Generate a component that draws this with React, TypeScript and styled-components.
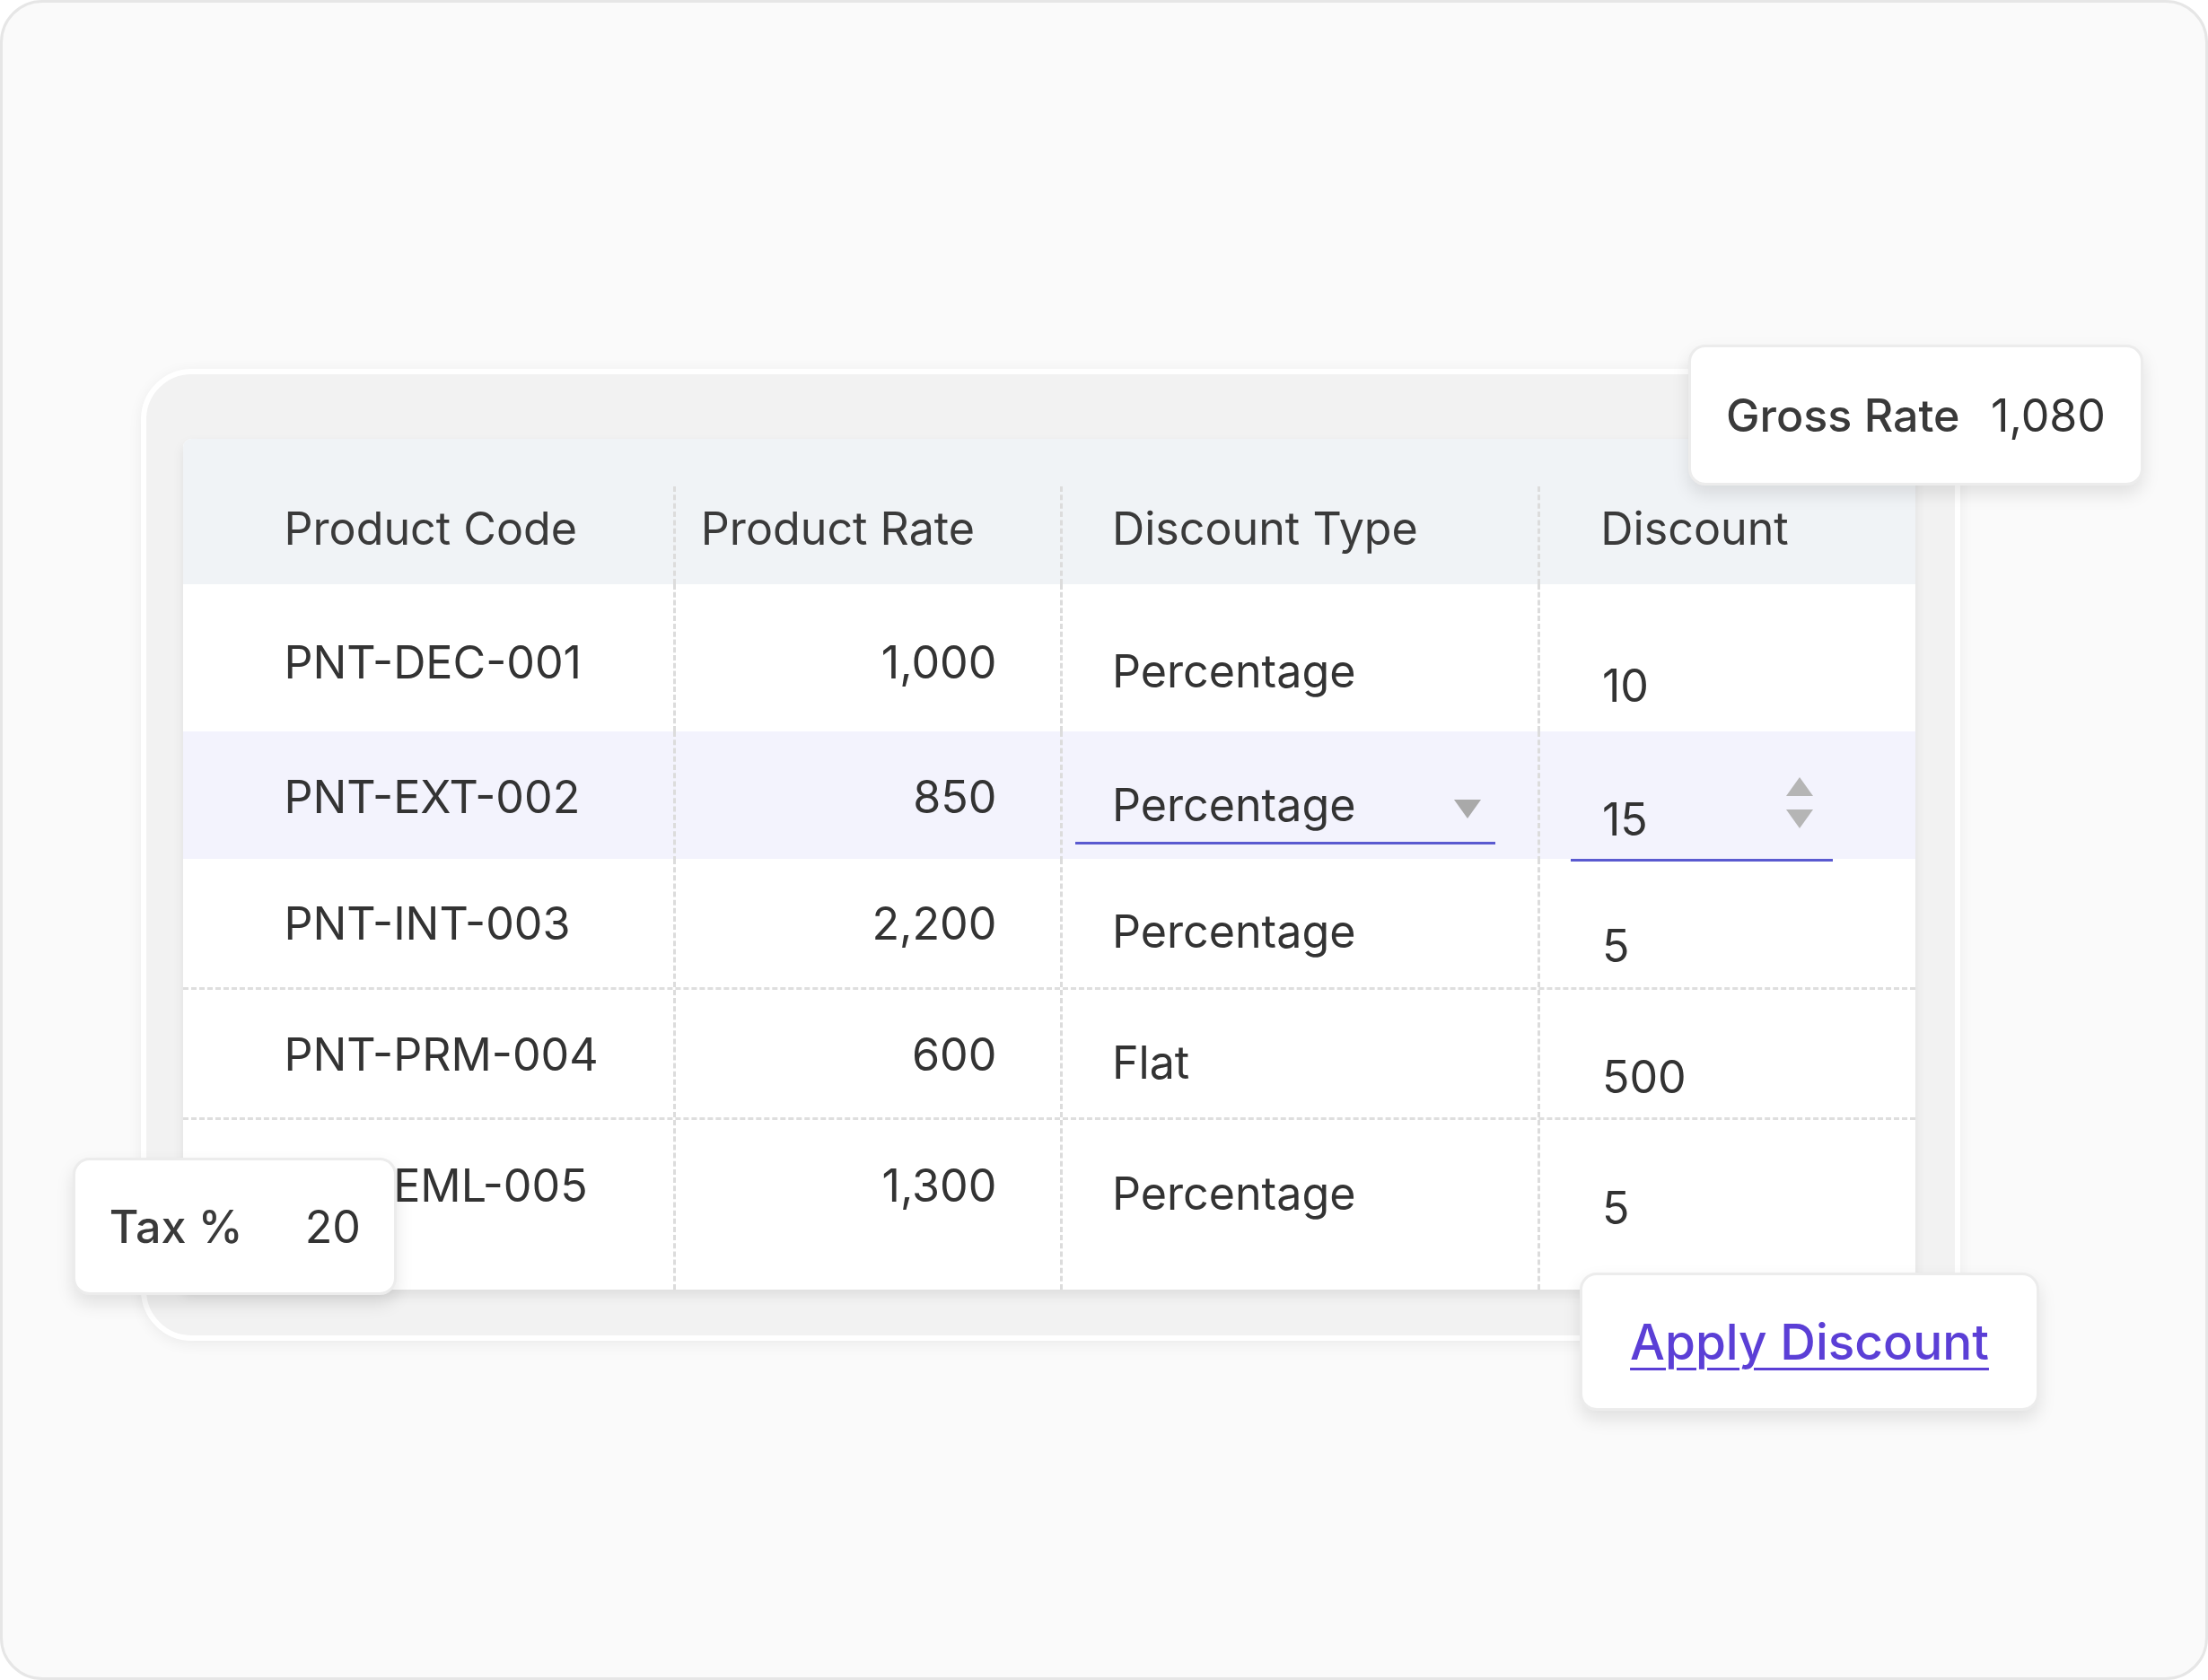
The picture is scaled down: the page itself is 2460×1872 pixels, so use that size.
import React from "react";
import styled, { createGlobalStyle } from "styled-components";

const Global = createGlobalStyle`
  body { margin: 0; background: #ffffff; font-family: "Inter", "Noto Sans", sans-serif; }
`;

const rows = [
  { code: "PNT-DEC-001", rate: "1,000", type: "Percentage", disc: "10" },
  { code: "PNT-EXT-002", rate: "850", type: "Percentage", disc: "15", active: true },
  { code: "PNT-INT-003", rate: "2,200", type: "Percentage", disc: "5", line: true },
  { code: "PNT-PRM-004", rate: "600", type: "Flat", disc: "500", line: true },
  { code: "PNT-EML-005", rate: "1,300", type: "Percentage", disc: "5" },
];

const App: React.FC = () => {
  return (
    <>
      <Global />
      <Stage>
        <Frame>
          <Panel>
            <Table>
              <HeadRow>
                <HeadCell $pad="0 0 0 72px">Product Code</HeadCell>
                <HeadCell $pad="0 0 0 18px" $dash>Product Rate</HeadCell>
                <HeadCell $pad="0 0 0 35px" $dash>Discount Type</HeadCell>
                <HeadCell $pad="0 0 0 43px" $dash>Discount</HeadCell>
              </HeadRow>
              {rows.map((r, i) => (
                <Row key={r.code} $active={r.active} $line={r.line} $h={i === 1 ? 90 : i === 0 ? 105 : i === 4 ? 120 : 93}>
                  <Cell $pad="0 0 0 72px" $top={i === 0 ? 40 : 30}>{r.code}</Cell>
                  <Cell $pad="0 45px 0 0" $top={i === 0 ? 40 : 30} $right $dash>{r.rate}</Cell>
                  <Cell $pad={r.active ? "0 0 0 9px" : "0 0 0 35px"} $top={i === 0 ? 46 : 36} $dash>
                    {r.active ? (
                      <Select>
                        Percentage
                        <Caret />
                      </Select>
                    ) : (
                      r.type
                    )}
                  </Cell>
                  <Cell $pad={r.active ? "0 0 0 22px" : "0 0 0 44px"} $top={i === 0 ? 56 : 46} $dash>
                    {r.active ? (
                      <NumInput>
                        15
                        <Spin>
                          <Up />
                          <Down />
                        </Spin>
                      </NumInput>
                    ) : (
                      r.disc
                    )}
                  </Cell>
                </Row>
              ))}
            </Table>
          </Panel>
          <Chip $left={1197} $top={243} $w={323} $h={100}>
            <Label>Gross Rate</Label>
            <Value>1,080</Value>
          </Chip>
          <Chip $left={50} $top={820} $w={230} $h={98}>
            <Label>Tax %</Label>
            <Value $gap={44}>20</Value>
          </Chip>
          <Chip $left={1120} $top={902} $w={326} $h={98}>
            <LinkText href="#">Apply Discount</LinkText>
          </Chip>
        </Frame>
      </Stage>
    </>
  );
};

const Stage = styled.div`
  zoom: 1.569;
  width: 1568px;
  height: 1193px;
`;

const Frame = styled.div`
  position: relative;
  box-sizing: border-box;
  width: 1568px;
  height: 1193px;
  background: #fafafa;
  border: 2px solid #e6e6e6;
  border-radius: 30px;
  padding: 260px 0 0 98px;
`;

const Panel = styled.div`
  box-sizing: border-box;
  width: 1292px;
  height: 690px;
  background: #f2f2f2;
  border: 4px solid #ffffff;
  border-radius: 36px;
  padding: 46px 28px 0 26px;
  box-shadow: 0 2px 10px rgba(0, 0, 0, 0.06);
`;

const Table = styled.div`
  background: #ffffff;
  border-radius: 6px 6px 0 0;
  overflow: hidden;
  box-shadow: 0 4px 8px rgba(0, 0, 0, 0.08);
  color: #333;
  font-size: 32px;
`;

const cols = "348px 275px 339px 266px";

const HeadRow = styled.div`
  display: grid;
  grid-template-columns: ${cols};
  height: 103px;
  background: #f0f3f6;
`;

const HeadCell = styled.div<{ $pad: string; $dash?: boolean }>`
  display: flex;
  align-items: flex-end;
  padding: ${(p) => p.$pad};
  padding-bottom: 20px;
  margin-top: 34px;
  border-left: ${(p) => (p.$dash ? "2px dashed #dcdcdc" : "none")};
  color: #3a3a3a;
`;

const Row = styled.div<{ $active?: boolean; $line?: boolean; $h: number }>`
  display: grid;
  grid-template-columns: ${cols};
  height: ${(p) => p.$h}px;
  background: ${(p) => (p.$active ? "#f3f3fd" : "#fff")};
  border-bottom: ${(p) => (p.$line ? "2px dashed #dedede" : "none")};
  box-sizing: border-box;
`;

const Cell = styled.div<{ $pad: string; $top: number; $right?: boolean; $dash?: boolean }>`
  box-sizing: border-box;
  padding: ${(p) => p.$pad};
  padding-top: ${(p) => p.$top}px;
  text-align: ${(p) => (p.$right ? "right" : "left")};
  border-left: ${(p) => (p.$dash ? "2px dashed #dcdcdc" : "none")};
  line-height: 1;
  position: relative;
`;

const Select = styled.div`
  position: relative;
  width: 272px;
  padding: 0 0 10px 26px;
  border-bottom: 2px solid #5a5ad0;
`;

const Caret = styled.span`
  position: absolute;
  right: 10px;
  top: 12px;
  border-left: 10px solid transparent;
  border-right: 10px solid transparent;
  border-top: 14px solid #a9a9a9;
`;

const NumInput = styled.div`
  position: relative;
  width: 164px;
  padding: 0 0 12px 22px;
  border-bottom: 2px solid #5a5ad0;
`;

const Spin = styled.span`
  position: absolute;
  right: 14px;
  top: -14px;
  display: flex;
  flex-direction: column;
  gap: 10px;
`;

const Up = styled.span`
  border-left: 10px solid transparent;
  border-right: 10px solid transparent;
  border-bottom: 14px solid #b5b5b5;
`;

const Down = styled.span`
  border-left: 10px solid transparent;
  border-right: 10px solid transparent;
  border-top: 14px solid #b5b5b5;
`;

const Chip = styled.div<{ $left: number; $top: number; $w: number; $h: number }>`
  position: absolute;
  left: ${(p) => p.$left}px;
  top: ${(p) => p.$top}px;
  width: ${(p) => p.$w}px;
  height: ${(p) => p.$h}px;
  box-sizing: border-box;
  display: flex;
  align-items: center;
  justify-content: center;
  background: #fff;
  border: 2px solid #ececec;
  border-radius: 12px;
  box-shadow: 0 6px 12px rgba(0, 0, 0, 0.1);
  font-size: 32px;
  color: #333;
`;

const Label = styled.span`
  font-weight: 500;
  color: #3a3a3a;
`;

const Value = styled.span<{ $gap?: number }>`
  margin-left: ${(p) => p.$gap ?? 22}px;
`;

const LinkText = styled.a`
  color: #5b3fd6;
  font-size: 35px;
  font-weight: 500;
  text-decoration: underline;
  text-underline-offset: 6px;
  text-decoration-thickness: 2px;
`;

export default App;
